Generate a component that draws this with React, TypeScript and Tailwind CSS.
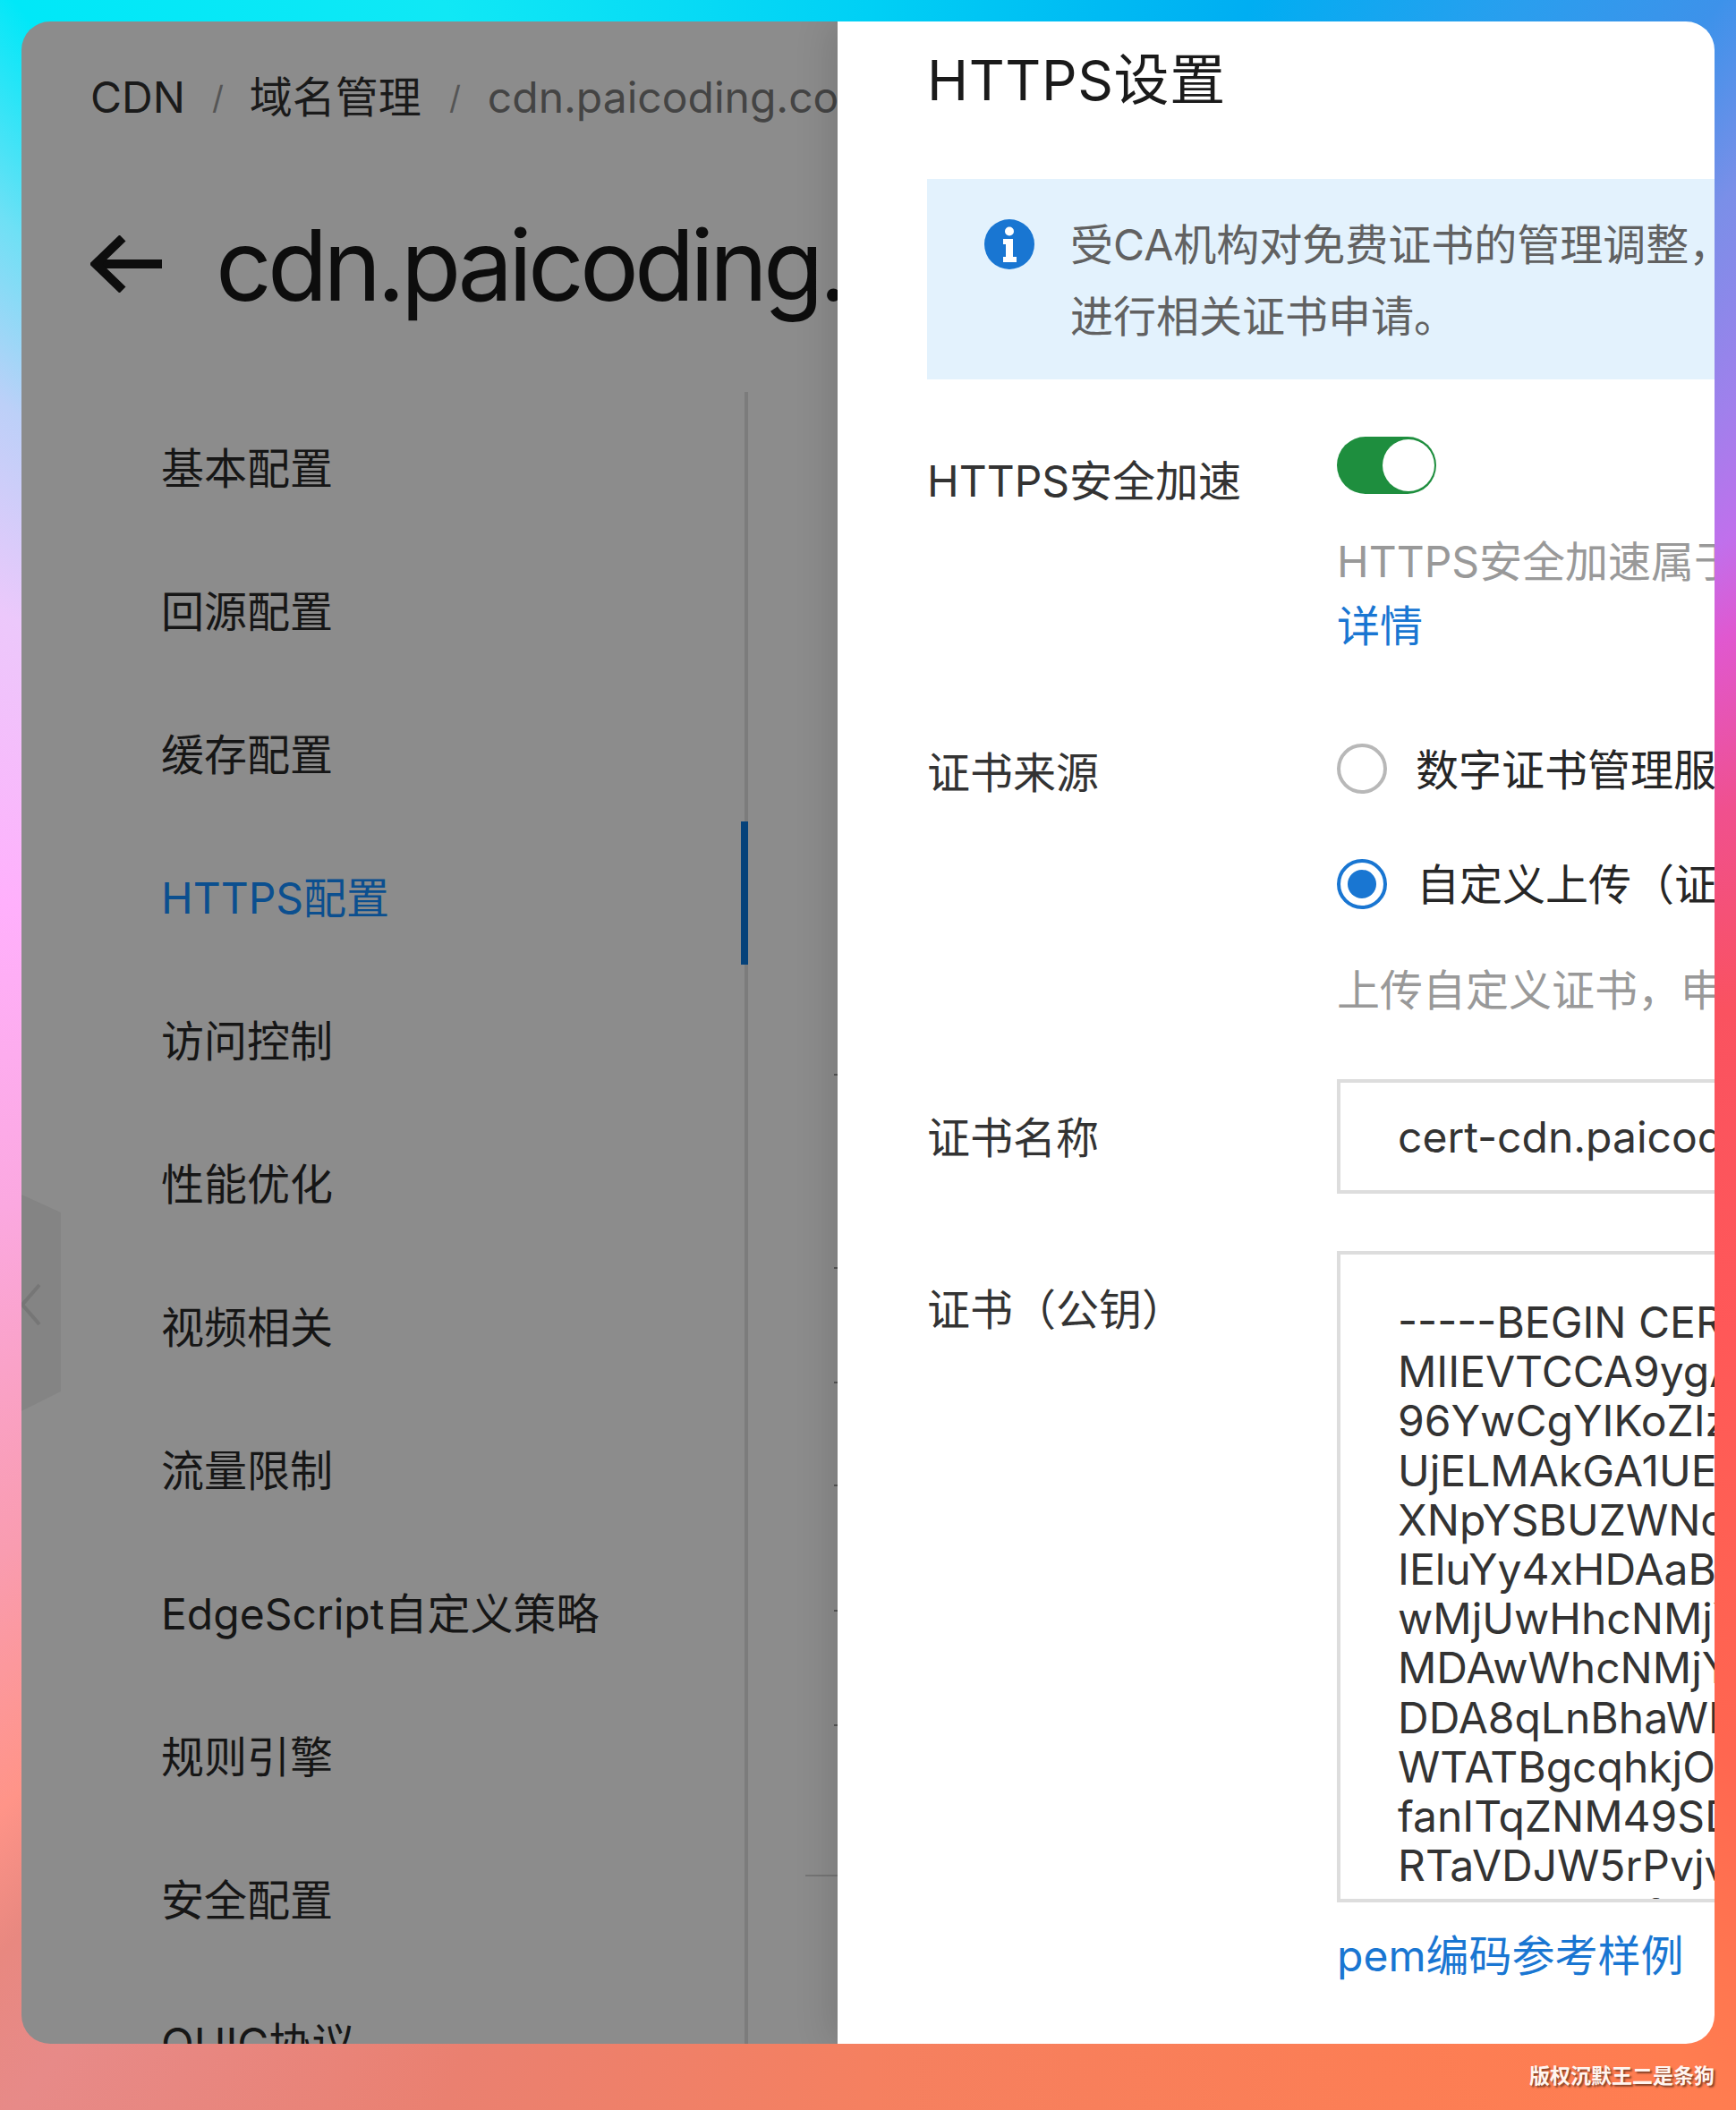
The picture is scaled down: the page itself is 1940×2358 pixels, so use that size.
const navItems = [
  "基本配置",
  "回源配置",
  "缓存配置",
  "HTTPS配置",
  "访问控制",
  "性能优化",
  "视频相关",
  "流量限制",
  "EdgeScript自定义策略",
  "规则引擎",
  "安全配置",
  "QUIC协议",
];

const certLines = [
  "-----BEGIN CERTIFICATE-----",
  "MIIEVTCCA9ygAwIBAgIQ",
  "96YwCgYIKoZIzj0EAwMw",
  "UjELMAkGA1UEBhMCQ04x",
  "XNpYSBUZWNobm9sb2dp",
  "IEluYy4xHDAaBgNVBAMT",
  "wMjUwHhcNMjYwMTAxMDAw",
  "MDAwWhcNMjYwNDAxMjM1",
  "DDA8qLnBhaWNvZGluZy5j",
  "WTATBgcqhkjOPQIBBggq",
  "fanITqZNM49SDk2Ld7Xs",
  "RTaVDJW5rPvjvQ3mHtYc",
  "4ecuKhXNRf3WkIpLa0Zb",
];

const FormLabel = ({ text, className }: { text: string; className?: string }) => (
  <div className={`w-[458px] shrink-0 text-[48px] leading-[72px] text-[#333333] ${className ?? ""}`}>{text}</div>
);

const LeftPanel = () => (
  <div className="relative w-[912px] shrink-0 overflow-hidden bg-[#8c8c8c]">
    <div className="mt-[49px] flex h-[72px] items-center whitespace-nowrap pl-[77px] text-[48px] leading-[72px] text-[#1a1a1a]">
      <span>CDN</span>
      <span className="ml-[30px] text-[36px] text-[#555555]">/</span>
      <span className="ml-[29px]">域名管理</span>
      <span className="ml-[31px] text-[36px] text-[#555555]">/</span>
      <span className="ml-[30px] text-[#444444]">cdn.paicoding.com</span>
    </div>
    <div className="mt-[84px] flex h-[132px] items-center whitespace-nowrap pl-[77px]">
      <svg width="80" height="64" viewBox="0 0 80 64" fill="none" stroke="#0d0d0d" strokeWidth="10" className="shrink-0">
        <path d="M80 32H8" />
        <path d="M36 3 6 32l30 29" />
      </svg>
      <h1 className="ml-[60px] pt-[2px] text-[110px] leading-[132px] tracking-[-0.045em] text-[#0d0d0d]">cdn.paicoding.com</h1>
    </div>
    <nav className="mt-[77px] w-[812px] border-r-4 border-[#7c7c7c]">
      {navItems.map((item) => (
        <div
          key={item}
          className={`relative flex h-[160px] items-center whitespace-nowrap pl-[156px] pt-3 text-[48px] leading-[72px] ${
            item === "HTTPS配置" ? "text-[#0b4f8f]" : "text-[#161616]"
          }`}
        >
          {item}
          {item === "HTTPS配置" && <span className="absolute right-[-4px] top-0 h-[160px] w-2 bg-[#05427a]" />}
        </div>
      ))}
    </nav>
    {/* collapse tab on the left edge */}
    <svg width="44" height="242" viewBox="0 0 44 242" className="absolute left-0 top-[1311px]">
      <polygon points="0,0 44,20 44,220 0,242" fill="#848484" />
      <polyline points="20,101 1,123 20,145" fill="none" stroke="#767676" strokeWidth="4" />
    </svg>
    {/* page content peeking out behind the drawer */}
    <div className="absolute left-[876px] top-[2071px] h-[2px] w-[36px] bg-[#757575]" />
    <div className="absolute left-[908px] top-[1176px] h-[2px] w-1 bg-[#555555]" />
    <div className="absolute left-[908px] top-[1392px] h-[2px] w-1 bg-[#555555]" />
    <div className="absolute left-[908px] top-[1520px] h-[2px] w-1 bg-[#555555]" />
    <div className="absolute left-[908px] top-[1635px] h-[2px] w-1 bg-[#555555]" />
    <div className="absolute left-[908px] top-[1775px] h-[2px] w-1 bg-[#555555]" />
    <div className="absolute left-[908px] top-[1903px] h-[2px] w-1 bg-[#555555]" />
  </div>
);

const RightPanel = () => (
  <div className="relative z-10 flex-1 overflow-hidden bg-white pl-[100px] shadow-[-6px_0_40px_rgba(0,0,0,0.14)]">
    <h2 className="h-[128px] whitespace-nowrap pt-[2px] text-[62px] leading-[128px] tracking-[0.01em] text-[#1a1a1a]">HTTPS设置</h2>
    <div className="mt-[48px] flex h-[224px] whitespace-nowrap bg-[#e3f2fd] pl-[64px]">
      <svg width="56" height="56" viewBox="0 0 56 56" className="mt-[45px] shrink-0">
        <circle cx="28" cy="28" r="28" fill="#1976d2" />
        <circle cx="28" cy="13.5" r="5" fill="#ffffff" />
        <path d="M21 22h11v20h4v6H21v-6h3V28h-3z" fill="#ffffff" />
      </svg>
      <div className="ml-[40px] pt-[34px] text-[48px] leading-[80px] text-[#616161]">
        <div>受CA机构对免费证书的管理调整，</div>
        <div>进行相关证书申请。</div>
      </div>
    </div>

    <div className="mt-[64px] flex">
      <FormLabel text="HTTPS安全加速" className="pt-[14px]" />
      <div className="w-[900px] shrink-0 whitespace-nowrap text-[48px] leading-[72px]">
        <div className="flex h-[64px] w-[111px] items-center justify-end rounded-full bg-[#1e8e3e] pr-[2px]">
          <span className="h-[58px] w-[58px] rounded-full bg-white" />
        </div>
        <div className="mt-[40px] text-[#999999]">HTTPS安全加速属于增值服务</div>
        <div className="text-[#1976d2]">详情</div>
      </div>
    </div>

    <div className="mt-[90px] flex">
      <FormLabel text="证书来源" className="pt-[2px]" />
      <div className="w-[900px] shrink-0 whitespace-nowrap text-[48px] leading-[72px] text-[#262626]">
        <div className="flex h-[66px] items-center">
          <span className="h-[56px] w-[56px] shrink-0 rounded-full border-4 border-[#b8b8b8]" />
          <span className="ml-[32px] pt-[3px]">数字证书管理服务</span>
        </div>
        <div className="mt-[63px] flex h-[66px] items-center">
          <span className="flex h-[56px] w-[56px] shrink-0 items-center justify-center rounded-full border-4 border-[#1976d2]">
            <span className="h-[32px] w-[32px] rounded-full bg-[#1976d2]" />
          </span>
          <span className="ml-[33px] pt-[2px]">自定义上传（证书）</span>
        </div>
        <div className="mt-[50px] text-[#999999]">上传自定义证书，申请</div>
      </div>
    </div>

    <div className="mt-[63px] flex">
      <FormLabel text="证书名称" className="pt-[30px]" />
      <div className="flex h-[128px] w-[900px] shrink-0 items-center whitespace-nowrap border-4 border-[#dddddd] pl-[64px] pt-[2px] text-[48px] leading-[72px] text-[#333333]">
        cert-cdn.paicoding.com
      </div>
    </div>

    <div className="mt-[64px] flex">
      <FormLabel text="证书（公钥）" className="pt-[30px]" />
      <div className="w-[900px] shrink-0 whitespace-nowrap text-[48px]">
        <div className="h-[728px] overflow-hidden border-4 border-[#dddddd] pl-[64px] pt-[48px] leading-[55.2px] text-[#333333]">
          {certLines.map((line) => (
            <div key={line}>{line}</div>
          ))}
        </div>
        <div className="mt-[24px] leading-[72px] text-[#1976d2]">pem编码参考样例</div>
      </div>
    </div>
  </div>
);

export default function App() {
  return (
    <div className="relative h-[2358px] w-[1940px] overflow-hidden bg-[conic-gradient(#00d0f5_0deg,#00aef2_20deg,#2a9eee_32deg,#3d92ea_39deg,#7a8fe8_45deg,#a080ec_53deg,#c070ec_59deg,#e058d0_64deg,#f0508e_74deg,#fa5260_87deg,#ff5858_108deg,#ff6650_129deg,#ff7850_138deg,#ff7d50_141deg,#f58060_180deg,#ea8070_202deg,#e78a88_219deg,#e88880_224deg,#ff9488_229deg,#f99cb0_240deg,#fba8e0_260deg,#ffb0fc_280deg,#ecc8fb_297deg,#bcd0f8_307deg,#6fe0f5_314deg,#00e8f8_321deg,#10e8f5_338deg,#00d0f5_360deg)] font-['Inter','Noto_Sans_CJK_SC',sans-serif]">
      <div className="ml-6 mt-6 flex h-[2260px] w-[1892px] overflow-hidden rounded-[32px]">
        <LeftPanel />
        <RightPanel />
      </div>
      <div className="absolute right-6 top-[2305px] whitespace-nowrap text-[23px] font-bold leading-[30px] text-[#fff5f0] [text-shadow:2px_2px_2px_rgba(80,40,20,0.7)]">
        版权沉默王二是条狗
      </div>
    </div>
  );
}
